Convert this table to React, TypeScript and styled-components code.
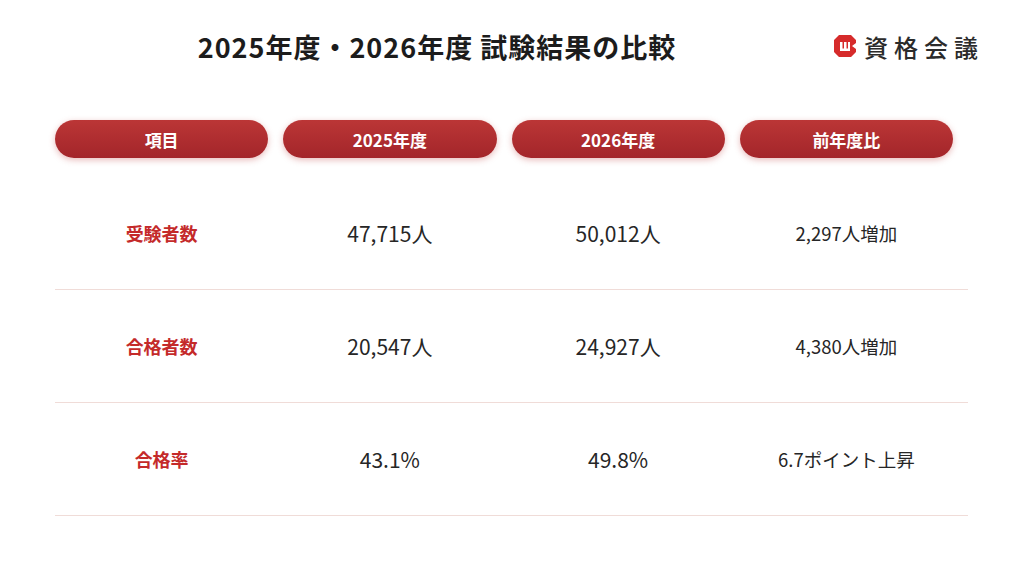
import React from 'react';
import styled, { createGlobalStyle } from 'styled-components';

interface Row {
  label: string;
  y2025: string;
  y2026: string;
  diff: string;
}

const rows: Row[] = [
  { label: '受験者数', y2025: '47,715人', y2026: '50,012人', diff: '2,297人増加' },
  { label: '合格者数', y2025: '20,547人', y2026: '24,927人', diff: '4,380人増加' },
  { label: '合格率', y2025: '43.1%', y2026: '49.8%', diff: '6.7ポイント上昇' },
];

const headings = ['項目', '2025年度', '2026年度', '前年度比'];

const GlobalStyle = createGlobalStyle`
  body {
    margin: 0;
    background: #ffffff;
    font-family: "Noto Sans CJK JP", "Noto Sans", sans-serif;
    color: #222;
  }
`;

const Page = styled.div`
  width: 1024px;
  height: 576px;
  overflow: hidden;
  background: #fff;
`;

const Header = styled.header`
  display: flex;
  align-items: center;
  height: 92px;
  padding: 0 46px 0 0;
`;

const Title = styled.h1`
  flex: 1;
  margin: 0;
  padding-left: 42px;
  text-align: center;
  font-size: 27px;
  font-weight: 700;
  letter-spacing: 1px;
  color: #1c1c1c;
`;

const Logo = styled.div`
  display: flex;
  align-items: center;
  gap: 8px;
`;

const LogoText = styled.span`
  font-size: 24px;
  font-weight: 500;
  letter-spacing: 6px;
  margin-right: -6px;
  color: #2b2b2b;
`;

const Table = styled.div`
  margin: 28px 56px 0 55px;
`;

const Grid = styled.div`
  display: grid;
  grid-template-columns: repeat(4, 1fr);
`;

const HeadRow = styled(Grid)`
  margin-bottom: 19px;
`;

const BodyRow = styled(Grid)`
  height: 112px;
  border-bottom: 1px solid #f0dcd8;
  align-items: center;
`;

const Pill = styled.div`
  margin-right: 15px;
  height: 38px;
  border-radius: 19px;
  background: linear-gradient(180deg, #bb3636 0%, #a3252a 100%);
  box-shadow: 0 2px 6px rgba(190, 60, 60, 0.35);
  display: flex;
  align-items: center;
  justify-content: center;
  color: #fff;
  font-size: 17px;
  font-weight: 700;
`;

const Cell = styled.div<{ $kind: 'label' | 'value' | 'diff' }>`
  margin-right: 15px;
  text-align: center;
  font-size: ${({ $kind }) => ($kind === 'label' ? '18px' : $kind === 'value' ? '21px' : '18.5px')};
  font-weight: ${({ $kind }) => ($kind === 'label' ? 700 : 400)};
  color: ${({ $kind }) => ($kind === 'label' ? '#c42a2a' : '#262626')};
`;

const LogoMark = () => (
  <svg width="22" height="22" viewBox="0 0 22 22" style={{ marginLeft: 2 }}>
    <path d="M5 0 H17 L22 5 V8 L18 11 L22 14 V17 L17 22 H5 L0 17 V5 Z" fill="#d62b2b" />
    <path d="M6 7 H8.5 V13.5 H10 V7 H12.5 V13.5 H14 V7 H16 V16 H6 Z" fill="#fff" />
  </svg>
);

export default function App() {
  return (
    <Page>
      <GlobalStyle />
      <Header>
        <Title>2025年度・2026年度 試験結果の比較</Title>
        <Logo>
          <LogoMark />
          <LogoText>資格会議</LogoText>
        </Logo>
      </Header>
      <Table>
        <HeadRow>
          {headings.map((h) => (
            <Pill key={h}>{h}</Pill>
          ))}
        </HeadRow>
        {rows.map((r) => (
          <BodyRow key={r.label}>
            <Cell $kind="label">{r.label}</Cell>
            <Cell $kind="value">{r.y2025}</Cell>
            <Cell $kind="value">{r.y2026}</Cell>
            <Cell $kind="diff">{r.diff}</Cell>
          </BodyRow>
        ))}
      </Table>
    </Page>
  );
}
